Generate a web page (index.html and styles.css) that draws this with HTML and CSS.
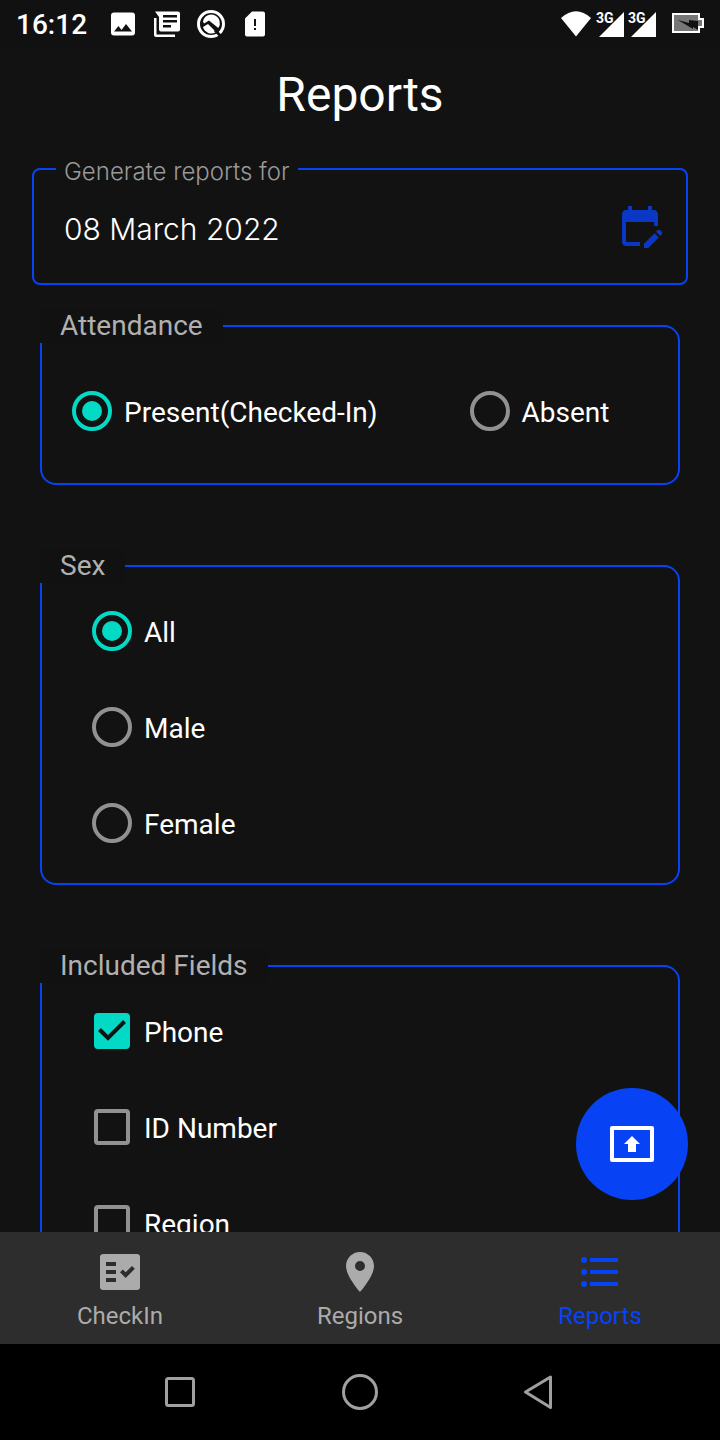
FILE: index.html
```html
<!DOCTYPE html>
<html lang="en">
<head>
<meta charset="utf-8">
<meta name="viewport" content="width=device-width, initial-scale=1">
<title>Reports</title>
<link rel="stylesheet" href="styles.css">
</head>
<body>
<div class="status-bar">
  <time class="clock">16:12</time>
  <div class="notifications">
    <svg class="status-icon" viewBox="0 0 32 32" aria-hidden="true"><path fill-rule="evenodd" d="M7 4.500h18a3 3 0 0 1 3 3v17a3 3 0 0 1-3 3H7a3 3 0 0 1-3-3v-17a3 3 0 0 1 3-3zM7 23.500h18l-6-7.500-4.500 6-3-4z"/></svg>
    <svg class="status-icon" viewBox="0 0 32 32" aria-hidden="true"><path fill-rule="evenodd" d="M4 3.500h23a2 2 0 0 1 2 2v16a2 2 0 0 1-2 2H10a2 2 0 0 1-2-2V9zM12 7v2.500h14V7zM12 12v2.500h14V12zM12 17v2.500h8V17z"/><path d="M3 10h2.500v16.500H24V29H5a2 2 0 0 1-2-2z"/></svg>
    <svg class="status-icon" viewBox="0 0 32 32" aria-hidden="true"><circle class="ring" cx="16" cy="16" r="12.500"/><path d="M8 13.500a8.500 8.500 0 1 1 15.300 6.500L14 12.500l-5 3z"/><path d="M8 19l5-3 8 8a8.500 8.500 0 0 1-13-5z"/><path class="slash" d="M20 22l5.500 6"/></svg>
    <svg class="status-icon" viewBox="0 0 32 32" aria-hidden="true"><path fill-rule="evenodd" d="M13 3.500h11a2 2 0 0 1 2 2v21a2 2 0 0 1-2 2H8a2 2 0 0 1-2-2V10.500zM15 11v7h2v-7zM15 20v2h2v-2z"/></svg>
  </div>
  <div class="signals">
    <svg class="status-icon" viewBox="0 0 32 32" aria-hidden="true"><path d="M1 10Q16-3.500 31 10L16 28.500z"/></svg>
    <svg class="status-icon" viewBox="0 0 32 32" role="img" aria-label="3G signal, SIM 1"><path d="M32 4v25H7z"/><text class="network" x="4" y="15">3G</text></svg>
    <svg class="status-icon" viewBox="0 0 32 32" role="img" aria-label="3G signal, SIM 2"><path d="M32 4v25H7z"/><text class="network" x="4" y="15">3G</text></svg>
    <svg class="status-icon battery" viewBox="0 0 32 32" role="img" aria-label="Battery charging"><path class="cell" d="M1 6h26v5h4v8h-4v5H1z"/><path class="bolt" d="M6 12l11 3v-3l9 1v9l-5-3v2z"/></svg>
  </div>
</div>

<div class="screen">
  <main class="content">
    <h1 class="title">Reports</h1>
    <form class="report-form">
      <fieldset class="date-field">
        <legend class="date-legend"><label for="report-date">Generate reports for</label></legend>
        <div class="date-row">
          <input class="date-input" id="report-date" type="text" value="08 March 2022">
          <button class="date-button" type="button" aria-label="Choose date">
            <svg class="icon" viewBox="0 0 24 24" aria-hidden="true"><path d="M12 22H5c-1.110 0-2-.9-2-2L3.010 6c0-1.100.88-2 1.990-2h1V2h2v2h8V2h2v2h1c1.100 0 2 .9 2 2v6h-2v-2H5v10h7v2zM22.130 16.990l.71-.71c.39-.39.39-1.020 0-1.410l-.71-.71c-.39-.39-1.020-.39-1.410 0l-.71.71 2.120 2.120zM21.420 17.700l-5.300 5.300H14v-2.120l5.300-5.300 2.120 2.120z"/></svg>
          </button>
        </div>
      </fieldset>

      <fieldset class="group">
        <legend class="group-legend">Attendance</legend>
        <div class="options options-row">
          <label class="option"><input class="radio" type="radio" name="attendance" checked><span class="option-text">Present(Checked-In)</span></label>
          <label class="option"><input class="radio" type="radio" name="attendance"><span class="option-text">Absent</span></label>
        </div>
      </fieldset>

      <fieldset class="group">
        <legend class="group-legend">Sex</legend>
        <div class="options">
          <label class="option"><input class="radio" type="radio" name="sex" checked><span class="option-text">All</span></label>
          <label class="option"><input class="radio" type="radio" name="sex"><span class="option-text">Male</span></label>
          <label class="option"><input class="radio" type="radio" name="sex"><span class="option-text">Female</span></label>
        </div>
      </fieldset>

      <fieldset class="group">
        <legend class="group-legend">Included Fields</legend>
        <div class="options">
          <label class="option"><span class="tick"><input class="checkbox" type="checkbox" checked><svg class="tick-mark" viewBox="0 0 36 36" aria-hidden="true"><path d="M5.500 16.500l8.500 8.500L30.500 8.500"/></svg></span><span class="option-text">Phone</span></label>
          <label class="option"><span class="tick"><input class="checkbox" type="checkbox"></span><span class="option-text">ID Number</span></label>
          <label class="option"><span class="tick"><input class="checkbox" type="checkbox"></span><span class="option-text">Region</span></label>
        </div>
      </fieldset>
    </form>
  </main>
  <button class="fab" type="button" aria-label="Present report">
    <svg class="icon" viewBox="0 0 24 24" aria-hidden="true"><path fill-rule="evenodd" d="M2 3h20a1 1 0 0 1 1 1v16a1 1 0 0 1-1 1H2a1 1 0 0 1-1-1V4a1 1 0 0 1 1-1zM3 5v14h18V5z"/><path d="M10 16v-4H8l4-4 4 4h-2v4z"/></svg>
  </button>
</div>

<nav class="tabs" aria-label="Main">
  <a class="tab" href="#checkin">
    <svg class="icon" viewBox="0 0 24 24" aria-hidden="true"><path fill-rule="evenodd" d="M20 3H4c-1.500 0-2 .5-2 1.500v15c0 1 .5 1.500 1.500 1.500h17c1 0 1.500-.5 1.500-1.500v-15c0-1-.5-1.500-1.500-1.500zM10 17H5v-2h5v2zm0-4H5v-2h5v2zm0-4H5V7h5v2zm4.820 6L12 12.160l1.410-1.410 1.410 1.420L17.990 9l1.420 1.420L14.820 15z"/></svg>
    CheckIn
  </a>
  <a class="tab" href="#regions">
    <svg class="icon" viewBox="0 0 24 24" aria-hidden="true"><path d="M12 2C8.130 2 5 5.130 5 9c0 5.250 7 13 7 13s7-7.750 7-13c0-3.870-3.130-7-7-7zm0 9.500a2.500 2.500 0 0 1 0-5 2.500 2.500 0 0 1 0 5z"/></svg>
    Regions
  </a>
  <a class="tab tab-active" href="#reports" aria-current="page">
    <svg class="icon" viewBox="0 0 24 24" aria-hidden="true"><circle cx="4" cy="6" r="1.500"/><circle cx="4" cy="12" r="1.500"/><circle cx="4" cy="18" r="1.500"/><path d="M7 5h14v2H7zM7 11h14v2H7zM7 17h14v2H7z"/></svg>
    Reports
  </a>
</nav>

<div class="system-nav">
  <button class="system-button" type="button" aria-label="Recent apps"><svg class="system-icon" viewBox="0 0 40 40" aria-hidden="true"><rect x="6.500" y="6.500" width="27" height="27" rx="2"/></svg></button>
  <button class="system-button" type="button" aria-label="Home"><svg class="system-icon" viewBox="0 0 40 40" aria-hidden="true"><circle cx="20" cy="20" r="16.500"/></svg></button>
  <button class="system-button" type="button" aria-label="Back"><svg class="system-icon" viewBox="0 0 40 40" aria-hidden="true"><path d="M30.500 5v30.500L5.500 20z"/></svg></button>
</div>
</body>
</html>
```
FILE: styles.css
```css
:root {
  --surface: #121212;
  --blue: #0743f5;
  --teal: #03dac5;
  --muted: #b0b0b0;
  --outline: #919191;
}

* {
  box-sizing: border-box;
}

body {
  display: flex;
  flex-direction: column;
  height: 100vh;
  margin: 0;
  background: var(--surface);
  color: #fff;
  font-family: Roboto, "Liberation Sans", sans-serif;
  font-size: 28px;
}

button {
  display: grid;
  place-items: center;
  padding: 0;
  border: 0;
  background: none;
}

fieldset {
  min-width: 0;
  margin: 0;
  padding: 0;
  border: 2px solid var(--blue);
}

.icon {
  width: 48px;
  height: 48px;
  fill: currentColor;
}

/* Status bar */

.status-bar {
  display: flex;
  flex: none;
  align-items: center;
  height: 48px;
  padding: 0 16px;
  background: #111;
}

.clock {
  padding-top: 2px;
  font-weight: 500;
  line-height: 48px;
}

.notifications {
  display: flex;
  gap: 12px;
  margin-left: 20px;
}

.signals {
  display: flex;
  margin-left: auto;
}

.status-icon {
  width: 32px;
  height: 32px;
  fill: #fff;
}

.ring {
  fill: none;
  stroke: #fff;
  stroke-width: 3;
}

.slash {
  fill: none;
  stroke: #111;
  stroke-width: 3;
}

.network {
  font-size: 14px;
  font-weight: 700;
}

.battery {
  margin-left: 16px;
}

.cell {
  fill: #777;
  stroke: #fff;
  stroke-width: 2;
}

.bolt {
  fill: #111;
}

/* Report form */

.screen {
  position: relative;
  flex: 1;
  min-height: 0;
}

.content {
  height: 100%;
  overflow-y: auto;
  scrollbar-width: none;
}

.title {
  margin: 0;
  padding: 19px 0 29px;
  font-size: 48px;
  font-weight: 400;
  line-height: 56px;
  text-align: center;
}

.report-form {
  display: flex;
  flex-direction: column;
}

.date-field {
  margin: 0 32px 24px;
  border-radius: 8px;
  font-family: Inter, "Liberation Sans", sans-serif;
  font-weight: 300;
}

.date-legend {
  margin-left: 22px;
  padding: 6px 8px 0;
  color: #999;
  font-size: 24px;
  line-height: 28px;
}

.date-row {
  display: flex;
  align-items: center;
  padding: 0 22px 11px 30px;
}

.date-input {
  flex: 1;
  min-width: 0;
  height: 86px;
  padding: 0;
  border: 0;
  outline: 0;
  background: none;
  color: #fff;
  font: inherit;
  font-size: 30px;
}

.date-button {
  margin-bottom: 6px;
  color: #0a38c5;
}

.group {
  margin: 0 40px 64px;
  border-radius: 16px;
}

.group-legend {
  margin-left: -2px;
  padding: 0 20px;
  background: #111;
  color: var(--muted);
  line-height: 34px;
}

.options {
  display: grid;
  padding: 0 0 12px;
}

.option {
  display: flex;
  align-items: center;
  gap: 12px;
  height: 96px;
  padding-left: 50px;
}

.option-text {
  padding-top: 2px;
}

.options-row {
  grid-template-columns: 5fr 3fr;
  padding: 20px 0 24px;
}

.options-row .option {
  padding-left: 30px;
}

.radio {
  flex: none;
  width: 40px;
  height: 40px;
  margin: 0;
  border: 4px solid var(--outline);
  border-radius: 50%;
  appearance: none;
}

.radio:checked {
  border-color: var(--teal);
  padding: 6px;
  background: var(--teal) content-box;
}

.tick {
  display: grid;
  place-items: center;
  width: 40px;
  height: 40px;
}

.checkbox {
  grid-area: 1 / 1;
  width: 36px;
  height: 36px;
  margin: 0;
  border: 4px solid var(--outline);
  border-radius: 4px;
  appearance: none;
}

.checkbox:checked {
  border-color: var(--teal);
  background: var(--teal);
}

.tick-mark {
  z-index: 1;
  grid-area: 1 / 1;
  width: 36px;
  height: 36px;
  fill: none;
  stroke: var(--surface);
  stroke-width: 4;
  pointer-events: none;
}

.fab {
  position: absolute;
  right: 32px;
  bottom: 32px;
  width: 112px;
  height: 112px;
  border-radius: 50%;
  background: var(--blue);
  color: #fff;
}

/* Bottom navigation */

.tabs {
  display: grid;
  flex: none;
  grid-template-columns: repeat(3, 1fr);
  background: #2d2d2d;
}

.tab {
  display: flex;
  flex-direction: column;
  align-items: center;
  gap: 4px;
  padding: 16px 0 12px;
  color: #ababab;
  font-size: 24px;
  line-height: 32px;
  text-decoration: none;
}

.tab-active {
  color: var(--blue);
}

.system-nav {
  display: grid;
  flex: none;
  grid-template-columns: repeat(3, 25%);
  justify-content: center;
  height: 96px;
  background: #000;
}

.system-icon {
  width: 40px;
  height: 40px;
  fill: none;
  stroke: #a0a0a0;
  stroke-width: 3;
  stroke-linejoin: round;
}
```
